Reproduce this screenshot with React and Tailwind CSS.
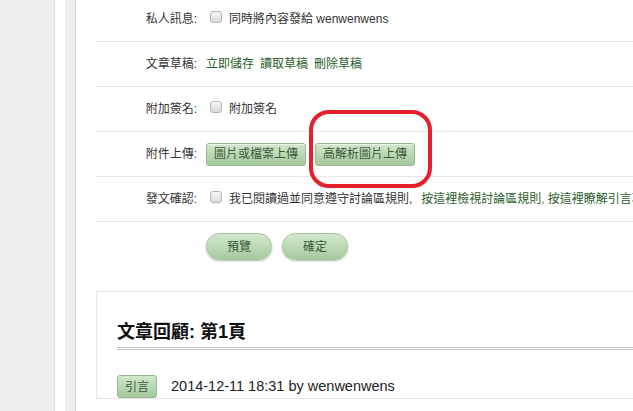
import React from 'react'

const btn =
  'flex h-[23px] w-[100px] items-center justify-center rounded-[3px] border border-[#94b98e] bg-linear-to-b from-[#d2e8cc] to-[#a3c89b] text-[12px] text-[#3a5a3a] shadow-[inset_0_1px_0_rgba(255,255,255,0.6)]'

const pill =
  'flex h-[27px] w-[66px] items-center justify-center rounded-full border border-[#a5c49f] bg-linear-to-b from-[#d3e8ce] to-[#a7ca9f] text-[12px] text-[#3a5a3a] shadow-[0_1px_2px_rgba(0,0,0,0.3)]'

function Checkbox() {
  return (
    <span className="ml-[4px] mr-[7px] inline-block h-[12px] w-[12px] shrink-0 -translate-y-[2px] rounded-[3px] border border-[#b8b8b8] bg-linear-to-b from-[#f7f7f7] to-[#d9d9d9]" />
  )
}

function Row({ label, children }) {
  return (
    <div className="flex h-[45px] items-center border-b border-[#e8e8e8]">
      <div className="w-[110px] shrink-0 pr-[9px] text-right">{label}</div>
      <div className="flex items-center whitespace-nowrap">{children}</div>
    </div>
  )
}

export default function App() {
  return (
    <div className="flex h-[411px] w-[633px] overflow-hidden bg-white font-['Liberation_Sans','Noto_Sans_CJK_TC',sans-serif] text-[12px] text-[#333]">
      <div className="w-[55px] shrink-0 border-r border-[#e0e0e0] bg-[#efefef]" />
      <div className="w-[10px] shrink-0 bg-white" />
      <div className="w-[11px] shrink-0 border-r border-[#d2d2d2] bg-[#ededed]" />

      <main className="relative min-w-0 flex-1 pl-[20px]">
        <div className="-mt-[3px]">
          <Row label="私人訊息:">
            <Checkbox />
            <span>同時將內容發給 wenwenwens</span>
          </Row>
          <Row label="文章草稿:">
            <div className="flex gap-[6px] text-[#2b5e2b]">
              <span>立即儲存</span>
              <span>讀取草稿</span>
              <span>刪除草稿</span>
            </div>
          </Row>
          <Row label="附加簽名:">
            <Checkbox />
            <span>附加簽名</span>
          </Row>
          <Row label="附件上傳:">
            <div className="flex gap-[9px]">
              <button className={btn}>圖片或檔案上傳</button>
              <button className={btn}>高解析圖片上傳</button>
            </div>
          </Row>
          <Row label="發文確認:">
            <Checkbox />
            <span>我已閱讀過並同意遵守討論區規則,</span>
            <span className="ml-[9px] text-[#2b5e2b]">按這裡檢視討論區規則</span>
            <span className="text-[#888]">, </span>
            <span className="ml-[3px] text-[#2b5e2b]">按這裡瞭解引言功能</span>
          </Row>
        </div>

        <div className="flex gap-[10px] pl-[110px] pt-[11px]">
          <button className={pill}>預覽</button>
          <button className={pill}>確定</button>
        </div>

        {/* review card */}
        <section className="mt-[31px] border border-r-0 border-[#e6e6e6] pl-[20px] pt-[28px]">
          <h2 className="border-b-[3px] border-double border-[#c8c8c8] pb-[3px] text-[18px] font-bold leading-[24px] text-[#111]">
            文章回顧: 第1頁
          </h2>
          <div className="mt-[25px] flex items-center">
            <button className="flex h-[23px] w-[40px] items-center justify-center rounded-[3px] border border-[#94b98e] bg-linear-to-b from-[#d2e8cc] to-[#a3c89b] text-[12px] text-[#3a5a3a]">
              引言
            </button>
            <span className="ml-[14px] text-[14.5px] text-[#222]">2014-12-11 18:31 by wenwenwens</span>
          </div>
        </section>

        {/* red annotation */}
        <div className="pointer-events-none absolute left-[233px] top-[110px] h-[78px] w-[123px] rounded-[20px] border-[4px] border-[#e3202b]" />
      </main>
    </div>
  )
}
